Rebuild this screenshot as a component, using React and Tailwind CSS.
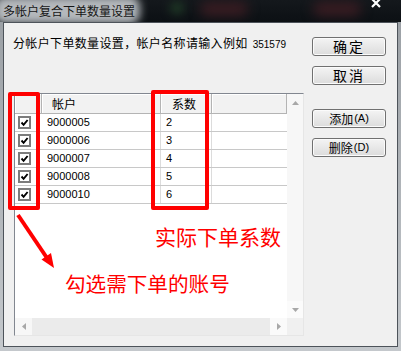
import React from "react";

const CJK = "font-['Noto_Sans_CJK_SC',sans-serif]";
const LAT = "font-['Liberation_Sans','Noto_Sans_CJK_SC',sans-serif]";

const rows = [
  ["9000005", "2"],
  ["9000006", "3"],
  ["9000007", "4"],
  ["9000008", "5"],
  ["9000010", "6"],
];

function Check() {
  return (
    <div className="w-[13px] h-[13px] border-2 border-[#7c7c7c] bg-white flex items-center justify-center">
      <svg width="9" height="9" viewBox="0 0 9 9">
        <path d="M1.5 4.5 L3.6 6.8 L7.6 2" stroke="#000" strokeWidth="1.9" fill="none" />
      </svg>
    </div>
  );
}

function Btn({ children, cls = "" }) {
  return (
    <div
      className={
        "h-[19px] w-[74px] border border-[#707070] rounded-[3px] bg-linear-to-b from-[#f4f4f4] to-[#dcdcdc] shadow-[inset_0_0_0_1px_#fbfbfb] flex items-center justify-center text-black " +
        cls
      }
    >
      {children}
    </div>
  );
}

function Tri({ dir }) {
  const pts = {
    up: "0,4 3.5,0 7,4",
    down: "0,0 7,0 3.5,4",
    left: "4,0 4,7 0,3.5",
    right: "0,0 0,7 4,3.5",
  }[dir];
  const w = dir === "up" || dir === "down" ? 7 : 4;
  const h = dir === "up" || dir === "down" ? 4 : 7;
  return (
    <svg width={w} height={h} viewBox={`0 0 ${w} ${h}`}>
      <polygon points={pts} fill="#a8a8a8" />
    </svg>
  );
}

function Grid() {
  return (
    <div className="w-[290px] h-[243px] border border-t-[#828790] border-l-[#828790] border-r-[#e6e6e6] border-b-[#e6e6e6] bg-white flex flex-col">
      <div className="flex flex-1 min-h-0">
        <div className="w-[272px] flex flex-col">
          <div className={"h-[20px] flex bg-[#f2f2f2] border-b border-[#b4b4b4] text-[12px] text-black " + CJK}>
            <div className="w-[27px] border-r border-[#b4b4b4] shadow-[inset_1px_1px_0_#fff]" />
            <div className="w-[119px] border-r border-[#b4b4b4] shadow-[inset_1px_1px_0_#fff] pl-[10px] flex items-center leading-none">
              帐户
            </div>
            <div className="w-[51px] border-r border-[#b4b4b4] shadow-[inset_1px_1px_0_#fff] pl-[11px] flex items-center leading-none">
              系数
            </div>
            <div className="flex-1 border-r border-[#b4b4b4] shadow-[inset_1px_1px_0_#fff]" />
          </div>
          {rows.map(([a, v]) => (
            <div key={a} className={"h-[18px] flex border-b border-[#c8c8c8] text-[11px] text-black " + LAT}>
              <div className="w-[27px] pl-[3px] flex items-center">
                <Check />
              </div>
              <div className="w-[119px] pl-[5px] flex items-center border-r border-[#dcdcdc]">{a}</div>
              <div className="w-[51px] pl-[5px] flex items-center border-r border-[#dcdcdc]">{v}</div>
              <div className="flex-1" />
            </div>
          ))}
        </div>
        <div className="w-[16px] bg-[#f7f7f7] flex flex-col justify-between">
          <div className="h-[17px] flex items-center justify-center">
            <Tri dir="up" />
          </div>
          <div className="h-[17px] bg-[#fbfbfb] flex items-center justify-center">
            <Tri dir="down" />
          </div>
        </div>
      </div>
      <div className="h-[17px] flex">
        <div className="w-[272px] bg-[#ebebeb] flex justify-between">
          <div className="w-[17px] flex items-center justify-center bg-[#f7f7f7]">
            <Tri dir="left" />
          </div>
          <div className="w-[17px] flex items-center justify-center bg-[#fafafa]">
            <Tri dir="right" />
          </div>
        </div>
        <div className="w-[16px] bg-[#f0f0f0]" />
      </div>
    </div>
  );
}

export default function App() {
  return (
    <div className="w-[401px] h-[351px] relative overflow-hidden bg-[#b6babe] flex flex-col">
      {/* title bar */}
      <div className="h-[22px] relative bg-linear-to-b from-[#14181c] to-[#0c1014] flex items-start justify-between overflow-hidden">
        <div className="absolute left-[170px] top-[2px] w-[14px] h-[12px] rounded-full bg-[#1f3a26] blur-[5px]" />
        <div className="absolute left-[200px] top-[2px] w-[48px] h-[14px] rounded-full bg-[#3a1c22] blur-[6px]" />
        <div className="absolute left-[313px] top-[2px] w-[48px] h-[14px] rounded-full bg-[#3a1c22] blur-[6px]" />
        <div className="absolute left-[-6px] top-[-4px] w-[146px] h-[28px] rounded-[10px] bg-[#b4b8bc] blur-[4px]" />
        <div className="relative ml-[3px] h-[21px] flex items-center">
          <span className={"text-[12px] leading-none text-[#161616] " + CJK}>多帐户复合下单数量设置</span>
        </div>
        <svg className="relative mr-[20px] -mt-[1px]" width="10" height="9" viewBox="0 0 10 9">
          <path d="M1 0 L9 8 M9 0 L1 8" stroke="#fff" strokeWidth="2.2" />
        </svg>
      </div>

      {/* frame with body */}
      <div className="flex-1 px-[3px] pb-[4px] bg-linear-to-b from-[#9ca1a6] to-[#c4c8cc]">
        <div className="h-full border border-[#4d535a] bg-[#f0f0f0] flex">
          <div className="flex flex-col pl-[9px] pt-[13px]">
            <div className={"h-[14px] leading-[14px] text-[12px] tracking-[0.35px] text-black whitespace-nowrap " + CJK}>
              分帐户下单数量设置，帐户名称请输入例如
              <span className={"text-[10px] tracking-[0px] ml-[5px] " + LAT}>351579</span>
            </div>
            <div className="mt-[43px] ml-[1px]">
              <Grid />
            </div>
          </div>
          <div className={"flex flex-col ml-[8px] pt-[14px] " + CJK}>
            <Btn cls="text-[14px] tracking-[2px]">确定</Btn>
            <Btn cls="mt-[10px] text-[14px] tracking-[2px]">取消</Btn>
            <Btn cls="mt-[24px] text-[12px]">
              添加<span className={"text-[11px] ml-[1px] " + LAT}>(A)</span>
            </Btn>
            <Btn cls="mt-[10px] text-[12px]">
              删除<span className={"text-[11px] ml-[1px] " + LAT}>(D)</span>
            </Btn>
          </div>
        </div>
      </div>

      {/* red annotations */}
      <div className="absolute left-[8px] top-[92px] w-[32px] h-[118px] border-[4px] border-[#ff0000] rounded-[2px]" />
      <div className="absolute left-[151px] top-[90px] w-[58px] h-[120px] border-[4px] border-[#ff0000] rounded-[2px]" />
      <div className={"absolute left-[155px] top-[226px] text-[21px] leading-[21px] text-[#ff0000] whitespace-nowrap " + CJK}>
        实际下单系数
      </div>
      <div className={"absolute left-[65px] top-[273px] text-[20.6px] leading-[21px] text-[#ff0000] whitespace-nowrap " + CJK}>
        勾选需下单的账号
      </div>
      <svg className="absolute left-0 top-0" width="80" height="280" viewBox="0 0 80 280">
        <line x1="18" y1="215" x2="47" y2="258" stroke="#ff0000" strokeWidth="4" />
        <polygon points="54,268 41.5,259.5 51,253" fill="#ff0000" />
      </svg>
    </div>
  );
}
